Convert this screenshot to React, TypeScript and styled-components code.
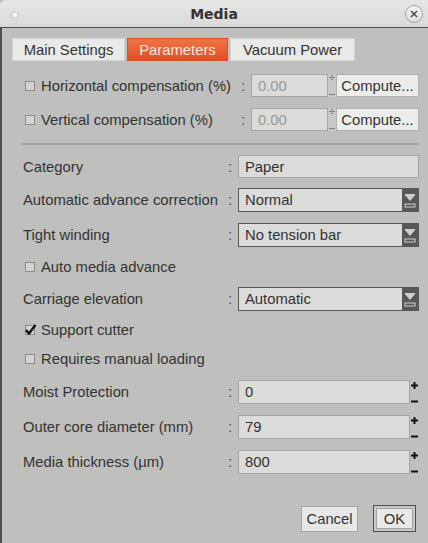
import React from "react";
import styled, { createGlobalStyle } from "styled-components";

const Global = createGlobalStyle`
  html, body { margin: 0; padding: 0; background: #bfbfbd; }
  body { font-family: "Liberation Sans", Arial, sans-serif; }
`;

const Window = styled.div`
  width: 428px;
  height: 543px;
  background: #bfbfbd;
  display: flex;
  flex-direction: column;
  overflow: hidden;
  color: #333;
  font-size: 14.8px;
`;

const TitleBar = styled.div`
  height: 27px;
  flex: none;
  background: linear-gradient(#e6e6e4, #d9d9d7);
  border-bottom: 1px solid #4e4e4e;
  border-top-left-radius: 6px;
  display: grid;
  grid-template-columns: 30px 1fr 30px;
  align-items: center;
`;

const Dot = styled.span`
  width: 6px;
  height: 6px;
  border-radius: 50%;
  background: radial-gradient(circle at 40% 40%, #ffffff, #d6d6d6);
  border: 1px solid #c8c8c8;
  justify-self: center;
  margin-top: 2px;
`;

const Title = styled.div`
  text-align: center;
  font-family: "DejaVu Sans", sans-serif;
  font-weight: bold;
  font-size: 14px;
  color: #333;
`;

const CloseBtn = styled.span`
  width: 16px;
  height: 16px;
  border-radius: 50%;
  border: 1px solid #a5a5a5;
  background: linear-gradient(#f2f2f2, #dedede);
  justify-self: center;
  margin-left: 2px;
  display: flex;
  align-items: center;
  justify-content: center;
`;

const Body = styled.div`
  flex: 1;
  border-left: 2px solid #4e4e4e;
  display: flex;
  flex-direction: column;
`;

const Tabs = styled.div`
  display: flex;
  gap: 2px;
  margin: 10px 0 0 10px;
`;

const Tab = styled.div<{ $active?: boolean; $w: number }>`
  width: ${(p) => p.$w}px;
  height: 23px;
  box-sizing: border-box;
  display: flex;
  align-items: center;
  justify-content: center;
  color: ${(p) => (p.$active ? "#fbe9e2" : "#333")};
  background: ${(p) =>
    p.$active ? "linear-gradient(#ef7443, #e24f26)" : "#e9e9e7"};
  border: 1px solid ${(p) => (p.$active ? "#d9542c" : "#d4d4d2")};
`;

const Content = styled.div`
  display: flex;
  flex-direction: column;
  padding: 0 9px 0 19px;
`;

const Row = styled.div<{ $label: number; $h: number; $mt: number }>`
  display: grid;
  grid-template-columns: ${(p) => p.$label}px 13px 1fr;
  align-items: center;
  height: ${(p) => p.$h}px;
  margin-top: ${(p) => p.$mt}px;
`;

const Label = styled.div`
  padding-left: 2px;
  white-space: nowrap;
`;

const CheckLabel = styled.label`
  display: flex;
  align-items: center;
  gap: 6px;
  padding-left: 4px;
  white-space: nowrap;
`;

const Box = styled.span`
  width: 10px;
  height: 10px;
  box-sizing: border-box;
  border: 1px solid #8c8c8a;
  background: #d3d3d1;
  position: relative;
  flex: none;
`;

const Colon = styled.span`
  padding-left: 3px;
  color: #555;
`;

const FieldGroup = styled.div`
  display: flex;
  height: 100%;
`;

const TextBox = styled.div<{ $disabled?: boolean; $w?: number }>`
  ${(p) => (p.$w ? `width: ${p.$w}px;` : "flex: 1;")}
  box-sizing: border-box;
  height: 100%;
  background: #dbdbd9;
  border: 1px solid #a4a4a2;
  display: flex;
  align-items: center;
  padding-left: 6px;
  color: ${(p) => (p.$disabled ? "#9a9a98" : "#333")};
`;

const TinySpin = styled.div`
  width: 8px;
  display: flex;
  flex-direction: column;
  justify-content: space-between;
  align-items: center;
  background: #c8c8c6;
  padding: 1px 0;
  box-sizing: border-box;
`;

const ComputeBtn = styled.div`
  flex: 1;
  box-sizing: border-box;
  height: 100%;
  background: #ececea;
  border: 1px solid #b0b0ae;
  display: flex;
  align-items: center;
  justify-content: center;
  color: #333;
`;

const Separator = styled.div`
  height: 2px;
  background: #a2a2a0;
  margin-top: 12px;
`;

const Combo = styled.div`
  height: 100%;
  box-sizing: border-box;
  border: 1px solid #575757;
  background: #dbdbd9;
  display: flex;
  align-items: stretch;
`;

const ComboText = styled.div`
  flex: 1;
  display: flex;
  align-items: center;
  padding-left: 6px;
`;

const ComboArrow = styled.div`
  width: 16px;
  background: #585858;
  display: flex;
  align-items: center;
  justify-content: center;
`;

const SpinBox = styled.div`
  display: flex;
  height: 100%;
`;

const PlusMinus = styled.div`
  width: 9px;
  display: flex;
  flex-direction: column;
  justify-content: space-between;
  align-items: center;
  padding: 2px 0 0;
  box-sizing: border-box;
`;

const Footer = styled.div`
  margin-top: auto;
  display: flex;
  justify-content: flex-end;
  align-items: center;
  gap: 15px;
  padding: 0 12px 11px 0;
`;

const Button = styled.div<{ $default?: boolean }>`
  height: ${(p) => (p.$default ? 27 : 26)}px;
  box-sizing: border-box;
  padding: 0 ${(p) => (p.$default ? 2 : 0)}px;
  width: ${(p) => (p.$default ? 43 : 57)}px;
  border: 1px solid ${(p) => (p.$default ? "#4e4e4e" : "#a4a4a2")};
  background: ${(p) => (p.$default ? "#c8c8c6" : "#e8e8e6")};
  display: flex;
  align-items: center;
  justify-content: center;
`;

const InnerBtn = styled.div`
  width: 100%;
  height: 21px;
  box-sizing: border-box;
  border: 1px solid #a4a4a2;
  background: #e8e8e6;
  display: flex;
  align-items: center;
  justify-content: center;
`;

const Check = ({ checked }: { checked?: boolean }) => (
  <Box>
    {checked && (
      <svg width="12" height="11" viewBox="0 0 12 11" style={{ position: "absolute", left: -1, top: -2 }}>
        <path d="M1 6 L4 9.5 L10.5 1" stroke="#111" strokeWidth="2.4" fill="none" />
      </svg>
    )}
  </Box>
);

const ArrowIcon = () => (
  <svg width="12" height="18" viewBox="0 0 12 18">
    <path d="M1 4 H11 L6 10 Z" fill="#cfcfcd" />
    <rect x="1" y="3" width="10" height="1.5" fill="#cfcfcd" />
    <rect x="1" y="13" width="10" height="3" fill="none" stroke="#cfcfcd" strokeWidth="1" />
  </svg>
);

const TinyUp = () => (
  <svg width="6" height="7" viewBox="0 0 6 7">
    <rect x="2.5" y="0" width="1" height="1" fill="#333" />
    <rect x="0.5" y="2" width="1" height="1" fill="#333" />
    <rect x="4.5" y="2" width="1" height="1" fill="#333" />
    <rect x="2.5" y="2" width="1" height="1" fill="#333" />
    <rect x="2.5" y="4" width="1" height="1" fill="#333" />
  </svg>
);

const TinyDown = () => (
  <svg width="6" height="3" viewBox="0 0 6 3">
    <rect x="0.5" y="1" width="1" height="1" fill="#333" />
    <rect x="2.5" y="1" width="1" height="1" fill="#333" />
    <rect x="4.5" y="1" width="1" height="1" fill="#333" />
  </svg>
);

const Plus = () => (
  <svg width="7" height="7" viewBox="0 0 7 7">
    <rect x="0" y="2.5" width="7" height="2" fill="#111" />
    <rect x="2.5" y="0" width="2" height="7" fill="#111" />
  </svg>
);

const Minus = () => (
  <svg width="7" height="5" viewBox="0 0 7 5">
    <rect x="0" y="1.5" width="7" height="2" fill="#111" />
  </svg>
);

const ComputeRow = ({ label, mt }: { label: string; mt: number }) => (
  <Row $label={217} $h={23} $mt={mt}>
    <CheckLabel>
      <Check />
      {label}
    </CheckLabel>
    <Colon>:</Colon>
    <FieldGroup>
      <TextBox $disabled $w={77}>0.00</TextBox>
      <TinySpin>
        <TinyUp />
        <TinyDown />
      </TinySpin>
      <ComputeBtn>Compute...</ComputeBtn>
    </FieldGroup>
  </Row>
);

const ComboRow = ({ label, value, mt }: { label: string; value: string; mt: number }) => (
  <Row $label={204} $h={24} $mt={mt}>
    <Label>{label}</Label>
    <Colon>:</Colon>
    <Combo>
      <ComboText>{value}</ComboText>
      <ComboArrow>
        <ArrowIcon />
      </ComboArrow>
    </Combo>
  </Row>
);

const CheckRow = ({ label, checked, mt }: { label: string; checked?: boolean; mt: number }) => (
  <Row $label={300} $h={18} $mt={mt}>
    <CheckLabel>
      <Check checked={checked} />
      {label}
    </CheckLabel>
  </Row>
);

const SpinRow = ({ label, value, mt }: { label: string; value: string; mt: number }) => (
  <Row $label={204} $h={24} $mt={mt}>
    <Label>{label}</Label>
    <Colon>:</Colon>
    <SpinBox>
      <TextBox>{value}</TextBox>
      <PlusMinus>
        <Plus />
        <Minus />
      </PlusMinus>
    </SpinBox>
  </Row>
);

export default function App() {
  return (
    <>
      <Global />
      <Window>
        <TitleBar>
          <Dot />
          <Title>Media</Title>
          <CloseBtn>
            <svg width="8" height="8" viewBox="0 0 8 8">
              <path d="M1 1 L7 7 M7 1 L1 7" stroke="#444" strokeWidth="1.4" />
            </svg>
          </CloseBtn>
        </TitleBar>
        <Body>
          <Tabs>
            <Tab $w={113}>Main Settings</Tab>
            <Tab $w={101} $active>Parameters</Tab>
            <Tab $w={125}>Vacuum Power</Tab>
          </Tabs>
          <Content>
            <ComputeRow label="Horizontal compensation (%)" mt={13} />
            <ComputeRow label="Vertical compensation (%)" mt={11} />
            <Separator />
            <Row $label={204} $h={23} $mt={10}>
              <Label>Category</Label>
              <Colon>:</Colon>
              <TextBox>Paper</TextBox>
            </Row>
            <ComboRow label="Automatic advance correction" value="Normal" mt={10} />
            <ComboRow label="Tight winding" value="No tension bar" mt={11} />
            <CheckRow label="Auto media advance" mt={11} />
            <ComboRow label="Carriage elevation" value="Automatic" mt={11} />
            <CheckRow label="Support cutter" checked mt={10} />
            <CheckRow label="Requires manual loading" mt={11} />
            <SpinRow label="Moist Protection" value="0" mt={12} />
            <SpinRow label="Outer core diameter (mm)" value="79" mt={11} />
            <SpinRow label="Media thickness (µm)" value="800" mt={11} />
          </Content>
          <Footer>
            <Button>Cancel</Button>
            <Button $default>
              <InnerBtn>OK</InnerBtn>
            </Button>
          </Footer>
        </Body>
      </Window>
    </>
  );
}
